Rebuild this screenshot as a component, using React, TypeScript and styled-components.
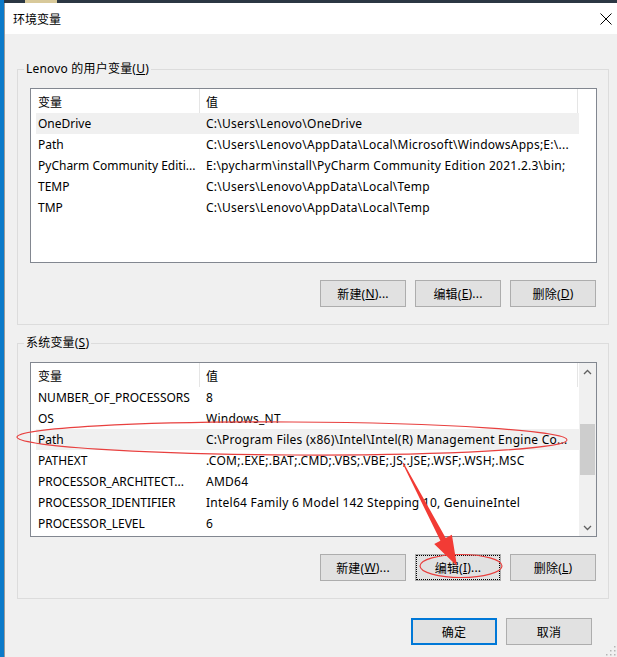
import React from 'react';
import styled, { createGlobalStyle, css } from 'styled-components';

const Global = createGlobalStyle`
  html, body { margin: 0; padding: 0; background: #f0f0f0; }
  body {
    font-family: "Noto Sans", "Noto Sans CJK SC", sans-serif;
    font-size: 12px;
    color: #000;
  }
  * { box-sizing: border-box; }
`;

const Screen = styled.div`
  position: relative;
  width: 617px;
  height: 657px;
  display: flex;
  overflow: hidden;
`;

const DesktopEdge = styled.div`
  flex: none;
  width: 4px;
  background: #0b7ac9;
`;

const Column = styled.div`
  flex: 1;
  min-width: 0;
  display: flex;
  flex-direction: column;
`;

const TopStrip = styled.div`
  flex: none;
  height: 3px;
  background: #2b3743;
  display: flex;
  padding-left: 21px;
`;

const StripPatch = styled.div`
  width: 32px;
  background: #d8c99a;
`;

const Window = styled.div`
  position: relative;
  flex: 1;
  display: flex;
  flex-direction: column;
  background: #f0f0f0;
  border-left: 1px solid #9a9a9a;
`;

const TitleBar = styled.div`
  flex: none;
  height: 31px;
  background: #fff;
  display: flex;
  align-items: center;
  justify-content: space-between;
  padding: 0 5px 0 8px;
`;

const Title = styled.span`
  font-size: 12px;
  line-height: 16px;
  font-family: "Noto Sans CJK SC", sans-serif;
`;

const Body = styled.div`
  flex: none;
  display: flex;
  flex-direction: column;
  gap: 10px;
  padding: 27px 8px 0 12px;
`;

const Group = styled.fieldset`
  margin: 0;
  border: 1px solid #dcdcdc;
  padding: 11px 11px 17px 12px;
  min-width: 0;
  display: flex;
  flex-direction: column;
  gap: 17px;
`;

const Legend = styled.legend`
  padding: 0 2px;
  margin-left: -6px;
  line-height: 16px;
  font-size: 12px;
  letter-spacing: 0.2px;
`;

const ListView = styled.div`
  height: 175px;
  border: 1px solid #828790;
  background: #fff;
  display: flex;
`;

const ListContent = styled.div`
  flex: 1;
  min-width: 0;
  padding-left: 5px;
  display: flex;
  flex-direction: column;
`;

const HeaderRow = styled.div`
  height: 24px;
  display: flex;
`;

const HeaderCell = styled.div<{ $w: number; $pad: number }>`
  flex: none;
  width: ${(p) => p.$w}px;
  padding-left: ${(p) => p.$pad}px;
  border-right: 1px solid #e5e5e5;
  display: flex;
  align-items: center;
  font-family: "Noto Sans CJK SC", sans-serif;
`;

const Row = styled.div<{ $selected?: boolean }>`
  height: 21px;
  display: flex;
  align-items: center;
  width: 543px;
  ${(p) =>
    p.$selected &&
    css`
      background: #f0f0f0;
    `}
`;

const Cell = styled.div<{ $w: number; $pad: number; $ls: number }>`
  flex: none;
  width: ${(p) => p.$w}px;
  padding-left: ${(p) => p.$pad}px;
  white-space: nowrap;
  overflow: hidden;
  line-height: 21px;
  letter-spacing: ${(p) => p.$ls}px;
`;

const ScrollBar = styled.div<{ $active: boolean }>`
  flex: none;
  width: 17px;
  display: flex;
  flex-direction: column;
  background: ${(p) => (p.$active ? '#f0f0f0' : '#fff')};
`;

const ScrollArrow = styled.div`
  flex: none;
  height: 17px;
  display: flex;
  align-items: center;
  justify-content: center;
`;

const ScrollTrack = styled.div`
  flex: 1;
  padding-top: 44px;
`;

const Thumb = styled.div`
  height: 51px;
  margin: 0 1px;
  background: #cdcdcd;
`;

const ButtonRow = styled.div`
  display: flex;
  justify-content: flex-end;
  gap: 9px;
  padding-right: 1px;
`;

const Button = styled.button<{ $variant?: 'default' | 'focus' }>`
  flex: none;
  width: 86px;
  height: 27px;
  padding: 0;
  margin: 0;
  background: #e1e1e1;
  border: 1px solid #adadad;
  font-family: "Noto Sans", "Noto Sans CJK SC", sans-serif;
  font-size: 12px;
  letter-spacing: 0.2px;
  color: #000;
  display: flex;
  align-items: center;
  justify-content: center;
  ${(p) =>
    p.$variant === 'default' &&
    css`
      border: 2px solid #0078d7;
    `}
  ${(p) =>
    p.$variant === 'focus' &&
    css`
      outline: 1px dotted #000;
      outline-offset: -2px;
    `}
`;

const Footer = styled.div`
  flex: none;
  display: flex;
  justify-content: flex-end;
  gap: 9px;
  padding: 19px 25px 0 0;
`;

const Grip = styled.svg`
  position: absolute;
  right: 1px;
  bottom: 1px;
`;

const Overlay = styled.svg`
  position: absolute;
  left: 0;
  top: 0;
  pointer-events: none;
`;

type Item = { name: string; value: string; selected?: boolean };

const userVars: Item[] = [
  { name: 'OneDrive', value: 'C:\\Users\\Lenovo\\OneDrive', selected: true },
  { name: 'Path', value: 'C:\\Users\\Lenovo\\AppData\\Local\\Microsoft\\WindowsApps;E:\\...' },
  { name: 'PyCharm Community Editi...', value: 'E:\\pycharm\\install\\PyCharm Community Edition 2021.2.3\\bin;' },
  { name: 'TEMP', value: 'C:\\Users\\Lenovo\\AppData\\Local\\Temp' },
  { name: 'TMP', value: 'C:\\Users\\Lenovo\\AppData\\Local\\Temp' },
];

const sysVars: Item[] = [
  { name: 'NUMBER_OF_PROCESSORS', value: '8' },
  { name: 'OS', value: 'Windows_NT' },
  { name: 'Path', value: 'C:\\Program Files (x86)\\Intel\\Intel(R) Management Engine Co...', selected: true },
  { name: 'PATHEXT', value: '.COM;.EXE;.BAT;.CMD;.VBS;.VBE;.JS;.JSE;.WSF;.WSH;.MSC' },
  { name: 'PROCESSOR_ARCHITECT...', value: 'AMD64' },
  { name: 'PROCESSOR_IDENTIFIER', value: 'Intel64 Family 6 Model 142 Stepping 10, GenuineIntel' },
  { name: 'PROCESSOR_LEVEL', value: '6' },
];

const Chevron = ({ up }: { up: boolean }) => (
  <svg width="9" height="6" viewBox="0 0 9 6">
    <polyline
      points={up ? '1,5 4.5,1.5 8,5' : '1,1 4.5,4.5 8,1'}
      fill="none"
      stroke="#606060"
      strokeWidth="1.3"
    />
  </svg>
);

const VarList = ({ items, scroll }: { items: Item[]; scroll: boolean }) => (
  <ListView>
    <ListContent>
      <HeaderRow>
        <HeaderCell $w={164} $pad={2}>变量</HeaderCell>
        <HeaderCell $w={378} $pad={6}>值</HeaderCell>
      </HeaderRow>
      {items.map((it) => (
        <Row key={it.name + it.value} $selected={it.selected}>
          <Cell $w={164} $pad={2} $ls={0}>{it.name}</Cell>
          <Cell $w={379} $pad={6} $ls={0.25}>{it.value}</Cell>
        </Row>
      ))}
    </ListContent>
    <ScrollBar $active={scroll}>
      {scroll && (
        <>
          <ScrollArrow>
            <Chevron up />
          </ScrollArrow>
          <ScrollTrack>
            <Thumb />
          </ScrollTrack>
          <ScrollArrow>
            <Chevron up={false} />
          </ScrollArrow>
        </>
      )}
    </ScrollBar>
  </ListView>
);

const Annotations = () => {
  const sx = 403, sy = 463, tx = 457, ty = 566;
  const len = Math.hypot(tx - sx, ty - sy);
  const dx = (tx - sx) / len, dy = (ty - sy) / len;
  const px = dy, py = -dx;
  const bx = tx - dx * 30, by = ty - dy * 30;
  const pts = [
    [sx + px * 0.6, sy + py * 0.6],
    [bx + px * 3, by + py * 3],
    [bx + px * 10, by + py * 10],
    [tx, ty],
    [bx - px * 10, by - py * 10],
    [bx - px * 3, by - py * 3],
    [sx - px * 0.6, sy - py * 0.6],
  ]
    .map((p) => p.map((v) => v.toFixed(1)).join(','))
    .join(' ');
  return (
    <Overlay width="617" height="657" viewBox="0 0 617 657">
      <ellipse
        cx="292"
        cy="438.5"
        rx="275"
        ry="16.5"
        fill="none"
        stroke="#e8403f"
        strokeWidth="1.2"
        transform="rotate(0.3 292 438.5)"
      />
      <ellipse cx="461" cy="566" rx="41" ry="11.5" fill="none" stroke="#e8403f" strokeWidth="1.2" />
      <polygon points={pts} fill="#f23b35" />
    </Overlay>
  );
};

export default function App() {
  return (
    <>
      <Global />
      <Screen>
        <DesktopEdge />
        <Column>
          <TopStrip>
            <StripPatch />
          </TopStrip>
          <Window>
            <TitleBar>
              <Title>环境变量</Title>
              <svg width="12" height="12" viewBox="0 0 12 12">
                <path d="M0.5 0.5 L11.5 11.5 M11.5 0.5 L0.5 11.5" stroke="#000" strokeWidth="1" />
              </svg>
            </TitleBar>
            <Body>
              <Group>
                <Legend>
                  Lenovo 的用户变量(<u>U</u>)
                </Legend>
                <VarList items={userVars} scroll={false} />
                <ButtonRow>
                  <Button>
                    新建(<u>N</u>)...
                  </Button>
                  <Button>
                    编辑(<u>E</u>)...
                  </Button>
                  <Button>
                    删除(<u>D</u>)
                  </Button>
                </ButtonRow>
              </Group>
              <Group>
                <Legend>
                  系统变量(<u>S</u>)
                </Legend>
                <VarList items={sysVars} scroll />
                <ButtonRow>
                  <Button>
                    新建(<u>W</u>)...
                  </Button>
                  <Button $variant="focus">
                    编辑(<u>I</u>)...
                  </Button>
                  <Button>
                    删除(<u>L</u>)
                  </Button>
                </ButtonRow>
              </Group>
            </Body>
            <Footer>
              <Button $variant="default">确定</Button>
              <Button>取消</Button>
            </Footer>
            <Grip width="11" height="11" viewBox="0 0 11 11">
              {[
                [9, 1],
                [9, 5],
                [5, 5],
                [9, 9],
                [5, 9],
                [1, 9],
              ].map(([x, y]) => (
                <rect key={`${x}-${y}`} x={x} y={y} width="1.5" height="1.5" fill="#b5b5b5" />
              ))}
            </Grip>
          </Window>
        </Column>
        <Annotations />
      </Screen>
    </>
  );
}
